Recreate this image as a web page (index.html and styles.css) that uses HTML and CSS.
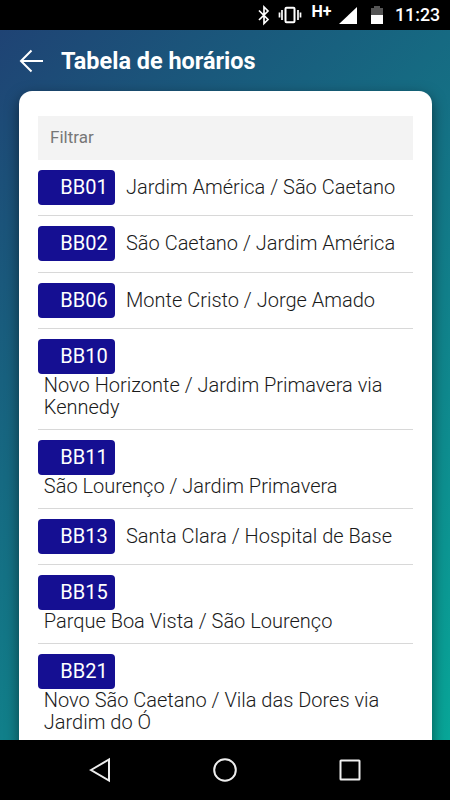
FILE: index.html
```
<!DOCTYPE html>
<html lang="pt-BR">
<head>
  <meta charset="UTF-8" />
  <meta name="viewport" content="width=device-width, initial-scale=1.0"/>
  <title>Tabela de horários</title>
  <link rel="stylesheet" href="styles.css">
</head>
<body>
  <div class="status-bar">
    <svg class="status-icons" width="150" height="30" viewBox="0 0 150 30">
      <!-- bluetooth -->
      <path d="M4 10.500 L13 19.500 L9 23.500 V7 L13 11 L4 20" fill="none" stroke="#fff" stroke-width="1.700"/>
      <!-- vibrate -->
      <rect x="30.500" y="7.700" width="9" height="14.600" rx="1" fill="none" stroke="#fff" stroke-width="2"/>
      <path d="M27 10v10M43 10v10M24.500 12.500v5M45.500 12.500v5" stroke="#fff" stroke-width="1.700"/>
      <!-- signal -->
      <path d="M84 24 L102 7 V24z" fill="#fff"/>
      <!-- battery -->
      <path d="M116 15V8h3V6h6v2h3v7z" fill="#555"/>
      <path d="M116 15h12v9h-12z" fill="#fff"/>
      <text class="network" x="56.500" y="17">H+</text>
    </svg>
    <span class="clock">11:23</span>
  </div>

  <div class="app">
    <div class="header">
      <svg class="back" width="24" height="24" viewBox="0 0 24 24">
        <path d="M12.500 1.500 L2 12 L12.500 22.500 M2 12 H24" fill="none" stroke="#fff" stroke-width="2"/>
      </svg>
      <h1>Tabela de horários</h1>
    </div>

    <div class="card">
      <input class="filter" type="text" placeholder="Filtrar">
      <ul class="lines">
        <li><span class="code">BB01</span><span class="name">Jardim América / São Caetano</span></li>
        <li><span class="code">BB02</span><span class="name">São Caetano / Jardim América</span></li>
        <li><span class="code">BB06</span><span class="name">Monte Cristo / Jorge Amado</span></li>
        <li class="stacked"><span class="code">BB10</span><span class="name">Novo Horizonte / Jardim Primavera via Kennedy</span></li>
        <li class="stacked"><span class="code">BB11</span><span class="name">São Lourenço / Jardim Primavera</span></li>
        <li><span class="code">BB13</span><span class="name">Santa Clara / Hospital de Base</span></li>
        <li class="stacked"><span class="code">BB15</span><span class="name">Parque Boa Vista / São Lourenço</span></li>
        <li class="stacked"><span class="code">BB21</span><span class="name">Novo São Caetano / Vila das Dores via Jardim do Ó</span></li>
      </ul>
    </div>
  </div>

  <div class="nav-bar">
    <svg width="26" height="26" viewBox="0 0 26 26"><path d="M4 13 L22 2.500 V23.500z"/></svg>
    <svg width="26" height="26" viewBox="0 0 26 26"><circle cx="13" cy="13" r="10.800"/></svg>
    <svg width="26" height="26" viewBox="0 0 26 26"><rect x="3.500" y="3.500" width="19" height="19" rx="0.500"/></svg>
  </div>
</body>
</html>
```
FILE: styles.css
```
* {
  box-sizing: border-box;
}

body {
  margin: 0;
  height: 800px;
  font-family: Roboto, sans-serif;
  display: flex;
  flex-direction: column;
  overflow: hidden;
}

/* STATUS BAR */
.status-bar {
  height: 30px;
  background: #000;
  color: #fff;
  display: flex;
  justify-content: flex-end;
  align-items: center;
  padding-right: 10px;
}

.status-icons {
  margin-right: -10px;
}

.network {
  fill: #fff;
  font-size: 16px;
  font-weight: 700;
}

.clock {
  width: 45px;
  font-size: 17.800px;
  font-weight: 500;
  line-height: 30px;
  white-space: nowrap;
}

/* PAGE */
.app {
  height: 710px;
  overflow: hidden;
  background: linear-gradient(135deg, #1f4374, #08a698);
}

.header {
  height: 61px;
  display: flex;
  align-items: center;
  padding: 1px 0 0 19px;
}

.header h1 {
  margin: 0 0 0 18px;
  color: #fff;
  font-size: 23.450px;
  font-weight: 700;
}

.card {
  height: 800px;
  margin: 0 18.500px;
  padding: 25px 19px 0;
  background: #fff;
  border-radius: 13px;
  box-shadow: 0 5px 14px rgba(0, 0, 0, 0.5);
}

.filter {
  display: block;
  width: 100%;
  height: 44px;
  padding: 0 12.500px 2px;
  border: none;
  border-radius: 0;
  background: #f3f3f3;
  font-family: inherit;
  font-size: 17px;
}

.filter::placeholder {
  color: #777;
}

/* BUS LINES */
.lines {
  list-style: none;
  margin: 0;
  padding: 0;
}

.lines li {
  display: flex;
  align-items: center;
  min-height: 56.250px;
  padding: 10px 0 10.250px;
  border-bottom: 1px solid #d8d8d8;
  font-size: 20px;
  line-height: 22.500px;
}

.code {
  flex: none;
  width: 77.500px;
  height: 35px;
  padding-left: 22.800px;
  background: #150f92;
  border-radius: 4px;
  color: #fff;
  line-height: 34px;
}

.name {
  padding-left: 11px;
  margin-top: -0.500px;
  color: #1a1a1a;
  font-weight: 300;
}

.lines li.stacked {
  flex-direction: column;
  align-items: flex-start;
}

.stacked .name {
  margin-top: 0;
  padding-left: 6.300px;
}

/* ANDROID BUTTONS */
.nav-bar {
  height: 60px;
  background: #000;
  display: flex;
  justify-content: center;
  align-items: center;
  gap: 99px;
}

.nav-bar svg {
  fill: none;
  stroke: #eee;
  stroke-width: 2;
}
```
